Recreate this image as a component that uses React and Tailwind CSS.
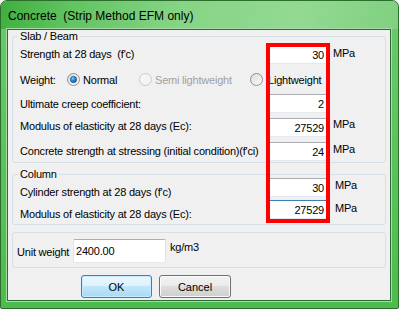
import React from 'react';

function Radio({ checked, disabled }) {
    const ring = disabled ? '#c9c9c9' : '#8e8f8f';
    return (
        <svg width="13" height="13" viewBox="0 0 13 13" className="shrink-0">
            <defs>
                <linearGradient id={`rf${checked ? 1 : 0}${disabled ? 1 : 0}`} x1="0" y1="0" x2="1" y2="1">
                    <stop offset="0" stopColor={disabled ? '#f7f7f7' : '#dcdcdc'} />
                    <stop offset="1" stopColor={disabled ? '#f2f2f2' : '#fbfbfb'} />
                </linearGradient>
                <radialGradient id="dot" cx="0.4" cy="0.35" r="0.7">
                    <stop offset="0" stopColor="#8ad1f7" />
                    <stop offset="0.45" stopColor="#2a8ad4" />
                    <stop offset="1" stopColor="#0b4c8c" />
                </radialGradient>
            </defs>
            <circle cx="6.5" cy="6.5" r="6" fill={`url(#rf${checked ? 1 : 0}${disabled ? 1 : 0})`} stroke={ring} strokeWidth="1" />
            {checked ? <circle cx="6.5" cy="6.5" r="3.2" fill="url(#dot)" stroke="#1c5a93" strokeWidth="0.6" /> : null}
        </svg>
    );
}

function Row({ label, value, unit, rowCls, labelCls, unitCls, inputCls }) {
    return (
        <div className={`flex items-start h-[19px] ${rowCls}`}>
            <span className={`w-[248px] leading-[14px] whitespace-pre ${labelCls}`}>{label}</span>
            <input
                readOnly
                value={value}
                className={`w-[60px] h-[19px] bg-white border text-right pr-[3px] leading-[14px] outline-none ${inputCls || 'border-[#e3e9ef] border-t-[#abadb3]'}`}
            />
            {unit ? <span className={`leading-[14px] ${unitCls}`}>{unit}</span> : null}
        </div>
    );
}

export default function App() {
    return (
        <div className="relative w-[399px] h-[309px] bg-[#f0f0f0] font-['Liberation_Sans',Arial,sans-serif] text-[11px] tracking-[-0.2px] text-black">
            {/* window frame */}
            <div className="flex flex-col w-full h-full rounded-t-[7px] rounded-b-[2px] border border-[#2c6e2c] bg-[linear-gradient(180deg,#6cc96c,#4dbb4d)]">
                <div className="h-[28px] shrink-0 flex items-center pl-[7px] rounded-t-[6px] bg-[linear-gradient(100deg,#3faf3f_0%,#62c462_18%,#86d486_45%,#93d993_75%,#80d080_100%)]">
                    <span className="text-[12px] tracking-normal whitespace-pre leading-[14px] mt-[1px]">Concrete  (Strip Method EFM only)</span>
                </div>
                <div className="mx-[6px] mr-[7px] mb-[7px] h-[272px] border border-[#2f6a3a] shadow-[0_0_0_1px_#a6dca6] bg-[#f0f0f0] px-[4px] flex flex-col">
                    {/* Slab / Beam */}
                    <fieldset className="border border-[#d5dfe5] rounded-[3px] pl-[7px] pb-[1px]">
                        <legend className="leading-[12px] px-[2px] -ml-[2px]">Slab / Beam</legend>
                        <Row rowCls="mt-[3px]" label="Strength at 28 days  (f'c)" labelCls="mt-[2px]" value="30" unit="MPa" unitCls="ml-[5px] mt-[1px]" />
                        <div className="flex items-center h-[19px] mt-[6px]">
                            <span className="w-[47px] leading-[14px]">Weight:</span>
                            <div className="flex items-center w-[72px]">
                                <Radio checked />
                                <span className="ml-[3px] leading-[14px]">Normal</span>
                            </div>
                            <div className="flex items-center w-[111px]">
                                <Radio disabled />
                                <span className="ml-[3px] leading-[14px] text-[#a0a0a0]">Semi lightweight</span>
                            </div>
                            <div className="flex items-center">
                                <Radio />
                                <span className="ml-[5px] leading-[14px]">Lightweight</span>
                            </div>
                        </div>
                        <Row rowCls="mt-[5px]" label="Ultimate creep coefficient:" labelCls="mt-[3px]" value="2" />
                        <Row rowCls="mt-[5px]" label="Modulus of elasticity at 28 days (Ec):" labelCls="mt-[1px]" value="27529" unit="MPa" unitCls="ml-[5px] -mt-[1px]" />
                        <Row rowCls="mt-[5px]" label="Concrete strength at stressing (initial condition)(f'ci)" labelCls="mt-[2px]" value="24" unit="MPa" unitCls="ml-[5px]" />
                    </fieldset>

                    {/* Column */}
                    <fieldset className="mt-[5px] border border-[#d5dfe5] rounded-[3px] pl-[7px] pb-[5px]">
                        <legend className="leading-[12px] px-[2px] -ml-[2px]">Column</legend>
                        <Row rowCls="-mt-[2px]" label="Cylinder strength at 28 days (f'c)" labelCls="mt-[7px]" value="30" unit="MPa" unitCls="ml-[7px]" />
                        <Row rowCls="mt-[3px]" label="Modulus of elasticity at 28 days (Ec):" labelCls="mt-[7px]" value="27529" unit="MPa" unitCls="ml-[7px] mt-[1px]" inputCls="border-[#e3e9ef] border-t-[#3c7fb1]" />
                    </fieldset>

                    {/* Unit weight */}
                    <fieldset className="mt-[7px] h-[36px] border border-[#d5dfe5] rounded-[3px] pl-[4px] flex items-start">
                        <span className="w-[56px] mt-[12px] leading-[14px]">Unit weight</span>
                        <input
                            readOnly
                            value="2400.00"
                            className="mt-[6px] w-[93px] h-[24px] bg-white border border-[#e2e3ea] border-t-[#abadb3] border-b-[#e3e9ef] rounded-[2px] pl-[2px] leading-[14px] outline-none"
                        />
                        <span className="ml-[4px] mt-[7px] leading-[14px]">kg/m3</span>
                    </fieldset>

                    {/* buttons */}
                    <div className="flex mt-[7px]">
                        <button className="ml-[69px] w-[71px] h-[23px] rounded-[3px] border border-[#3c7fb1] shadow-[inset_0_0_0_1px_#c4ebff] bg-[linear-gradient(180deg,#ecf7fd_0%,#dff2fc_45%,#c1e6fa_50%,#a9daf5_100%)] leading-[14px] tracking-normal">
                            OK
                        </button>
                        <button className="ml-[7px] w-[72px] h-[23px] rounded-[3px] border border-[#707070] shadow-[inset_0_0_0_1px_#fbfbfb] bg-[linear-gradient(180deg,#f2f2f2_0%,#ebebeb_45%,#dddddd_50%,#cfcfcf_100%)] leading-[14px] tracking-normal">
                            Cancel
                        </button>
                    </div>
                </div>
            </div>
            {/* red highlight drawn on the screenshot */}
            <div className="absolute left-[266px] top-[43px] w-[64px] h-[180px] border-4 border-[#ff0000] pointer-events-none" />
        </div>
    );
}
